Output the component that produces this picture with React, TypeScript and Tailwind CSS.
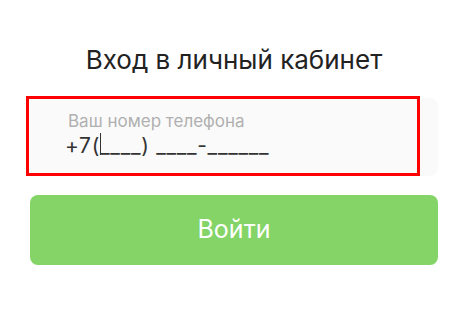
const App = () => {
  return (
    <div className="min-h-[309px] bg-white font-['Inter',sans-serif]">
      <div className="ml-[30px] w-[408px] pt-[40px]">
        <h1 className="text-center text-[26px] leading-[40px] font-normal text-[#222222]">
          Вход в личный кабинет
        </h1>

        {/* Phone field */}
        <div className="relative mt-[18px] h-[78px] rounded-lg bg-[#fafafa]">
          <div className="pl-[38px] pt-[14px] text-[17px] leading-[19px] text-[#b0b0b0]">
            Ваш номер телефона
          </div>
          <div className="flex items-center pl-[35px] pt-[3px] text-[21px] leading-[24px] tracking-[0.7px] text-[#333333]">
            <span>+7(</span>
            <span className="relative">
              <span className="absolute left-0 top-[-1px] h-[22px] w-px bg-[#333333]" />
              ____
            </span>
            <span>) ____-______</span>
          </div>

          {/* highlight frame */}
          <div className="absolute left-[-4px] top-[-2px] h-[80px] w-[394px] border-[3px] border-[#ff0000]" />
        </div>

        <button className="mt-[19px] flex h-[70px] w-full items-center justify-center rounded-lg bg-[#84d467] text-[25px] text-white">
          Войти
        </button>
      </div>
    </div>
  );
};

export default App;
